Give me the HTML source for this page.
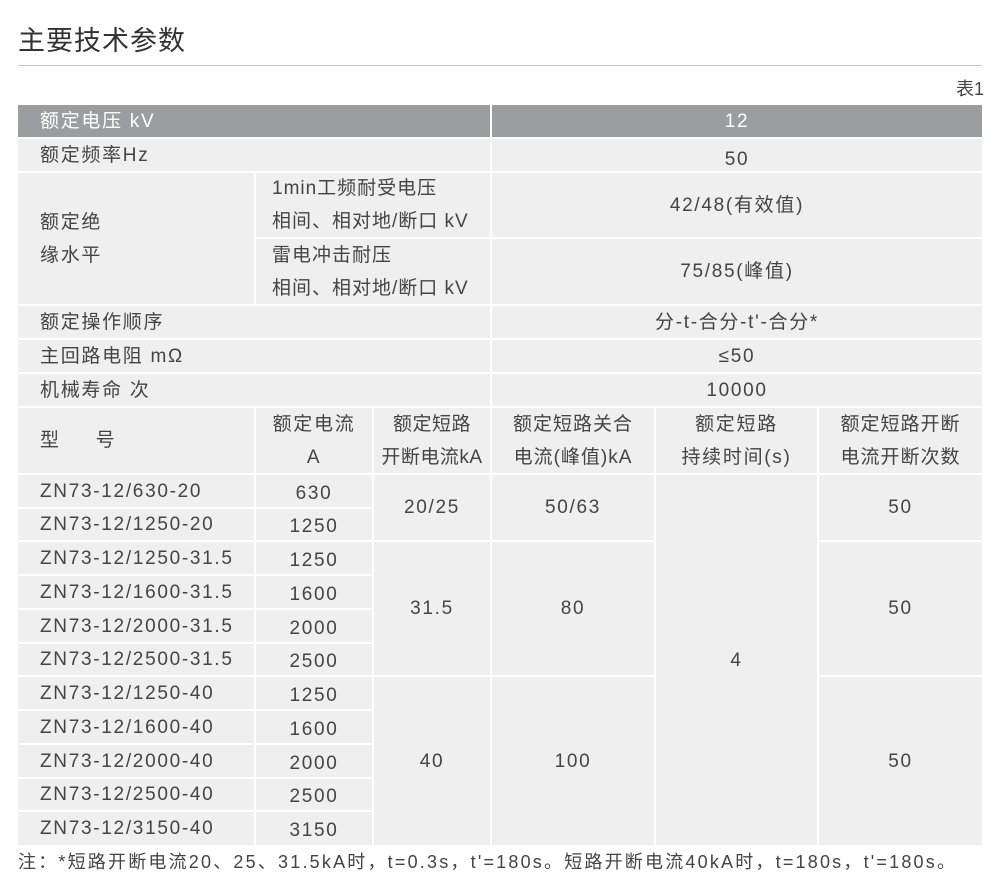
<!DOCTYPE html>
<html><head><meta charset="utf-8"><style>
*{margin:0;padding:0;box-sizing:border-box}
body{width:1000px;height:889px;background:#fff;font-family:"Liberation Sans","Noto Sans CJK SC",sans-serif;color:#444;position:relative;overflow:hidden}
.t{position:absolute;left:18px;top:19px;font-size:27px;color:#333;letter-spacing:1px}
.hr{position:absolute;left:18px;top:65px;width:964px;height:1px;background:#c8c8c8}
.b1{position:absolute;right:16px;top:75px;font-size:18px}
.c{position:absolute;background:#efefef;font-size:19px;display:flex;align-items:center;justify-content:center;text-align:center;line-height:33px;letter-spacing:1.7px}
.l{justify-content:flex-start;text-align:left;padding-left:22px}
.l2{justify-content:flex-start;text-align:left;padding-left:16px}
.h{background:#9b9ea1;color:#fff}
.n{position:absolute;left:18px;top:848px;font-size:18px;letter-spacing:2.2px;white-space:nowrap}
</style></head><body>
<div class="t">主要技术参数</div>
<div class="hr"></div>
<div class="b1">表1</div>

<div class="c h l" style="left:18px;top:105px;width:472px;height:32px">额定电压 kV</div>
<div class="c h" style="left:492px;top:105px;width:490px;height:32px">12</div>

<div class="c l" style="left:18px;top:139px;width:472px;height:32px">额定频率Hz</div>
<div class="c" style="left:492px;top:139px;width:490px;height:32px;padding-top:8px">50</div>

<div class="c l" style="left:18px;top:173px;width:236px;height:131px">额定绝<br>缘水平</div>
<div class="c l2" style="left:256px;top:173px;width:234px;height:64px;letter-spacing:1px">1min工频耐受电压<br>相间、相对地/断口 kV</div>
<div class="c l2" style="left:256px;top:239px;width:234px;height:65px;letter-spacing:1px">雷电冲击耐压<br>相间、相对地/断口 kV</div>
<div class="c" style="left:492px;top:173px;width:490px;height:64px">42/48(有效值)</div>
<div class="c" style="left:492px;top:239px;width:490px;height:65px">75/85(峰值)</div>

<div class="c l" style="left:18px;top:306px;width:472px;height:32px">额定操作顺序</div>
<div class="c" style="left:492px;top:306px;width:490px;height:32px">分-t-合分-t'-合分*</div>
<div class="c l" style="left:18px;top:340px;width:472px;height:32px">主回路电阻 mΩ</div>
<div class="c" style="left:492px;top:340px;width:490px;height:32px">≤50</div>
<div class="c l" style="left:18px;top:374px;width:472px;height:32px">机械寿命 次</div>
<div class="c" style="left:492px;top:374px;width:490px;height:32px">10000</div>

<div class="c l" style="left:18px;top:408px;width:236px;height:65px">型&nbsp;&nbsp;&nbsp;&nbsp;&nbsp;号</div>
<div class="c" style="left:256px;top:408px;width:116px;height:65px">额定电流<br>A</div>
<div class="c" style="left:374px;top:408px;width:116px;height:65px;letter-spacing:0.5px">额定短路<br>开断电流kA</div>
<div class="c" style="left:492px;top:408px;width:162px;height:65px;letter-spacing:1px">额定短路关合<br>电流(峰值)kA</div>
<div class="c" style="left:656px;top:408px;width:161px;height:65px">额定短路<br>持续时间(s)</div>
<div class="c" style="left:819px;top:408px;width:163px;height:65px;letter-spacing:1px">额定短路开断<br>电流开断次数</div>

<div class="c l" style="left:18px;top:475px;width:236px;height:32px">ZN73-12/630-20</div>
<div class="c" style="left:256px;top:475px;width:116px;height:32px;padding-top:4px">630</div>
<div class="c l" style="left:18px;top:509px;width:236px;height:31px">ZN73-12/1250-20</div>
<div class="c" style="left:256px;top:509px;width:116px;height:31px;padding-top:4px">1250</div>
<div class="c l" style="left:18px;top:542px;width:236px;height:32px">ZN73-12/1250-31.5</div>
<div class="c" style="left:256px;top:542px;width:116px;height:32px;padding-top:4px">1250</div>
<div class="c l" style="left:18px;top:576px;width:236px;height:32px">ZN73-12/1600-31.5</div>
<div class="c" style="left:256px;top:576px;width:116px;height:32px;padding-top:4px">1600</div>
<div class="c l" style="left:18px;top:610px;width:236px;height:32px">ZN73-12/2000-31.5</div>
<div class="c" style="left:256px;top:610px;width:116px;height:32px;padding-top:4px">2000</div>
<div class="c l" style="left:18px;top:644px;width:236px;height:31px">ZN73-12/2500-31.5</div>
<div class="c" style="left:256px;top:644px;width:116px;height:31px;padding-top:4px">2500</div>
<div class="c l" style="left:18px;top:677px;width:236px;height:32px">ZN73-12/1250-40</div>
<div class="c" style="left:256px;top:677px;width:116px;height:32px;padding-top:4px">1250</div>
<div class="c l" style="left:18px;top:711px;width:236px;height:32px">ZN73-12/1600-40</div>
<div class="c" style="left:256px;top:711px;width:116px;height:32px;padding-top:4px">1600</div>
<div class="c l" style="left:18px;top:745px;width:236px;height:32px">ZN73-12/2000-40</div>
<div class="c" style="left:256px;top:745px;width:116px;height:32px;padding-top:4px">2000</div>
<div class="c l" style="left:18px;top:779px;width:236px;height:31px">ZN73-12/2500-40</div>
<div class="c" style="left:256px;top:779px;width:116px;height:31px;padding-top:4px">2500</div>
<div class="c l" style="left:18px;top:812px;width:236px;height:33px">ZN73-12/3150-40</div>
<div class="c" style="left:256px;top:812px;width:116px;height:33px;padding-top:4px">3150</div>

<div class="c" style="left:374px;top:475px;width:116px;height:65px">20/25</div>
<div class="c" style="left:374px;top:542px;width:116px;height:133px">31.5</div>
<div class="c" style="left:374px;top:677px;width:116px;height:168px">40</div>
<div class="c" style="left:492px;top:475px;width:162px;height:65px">50/63</div>
<div class="c" style="left:492px;top:542px;width:162px;height:133px">80</div>
<div class="c" style="left:492px;top:677px;width:162px;height:168px">100</div>
<div class="c" style="left:656px;top:475px;width:161px;height:370px">4</div>
<div class="c" style="left:819px;top:475px;width:163px;height:65px">50</div>
<div class="c" style="left:819px;top:542px;width:163px;height:133px">50</div>
<div class="c" style="left:819px;top:677px;width:163px;height:168px">50</div>

<div class="n">注：*短路开断电流20、25、31.5kA时，t=0.3s，t'=180s。短路开断电流40kA时，t=180s，t'=180s。</div>
</body></html>
